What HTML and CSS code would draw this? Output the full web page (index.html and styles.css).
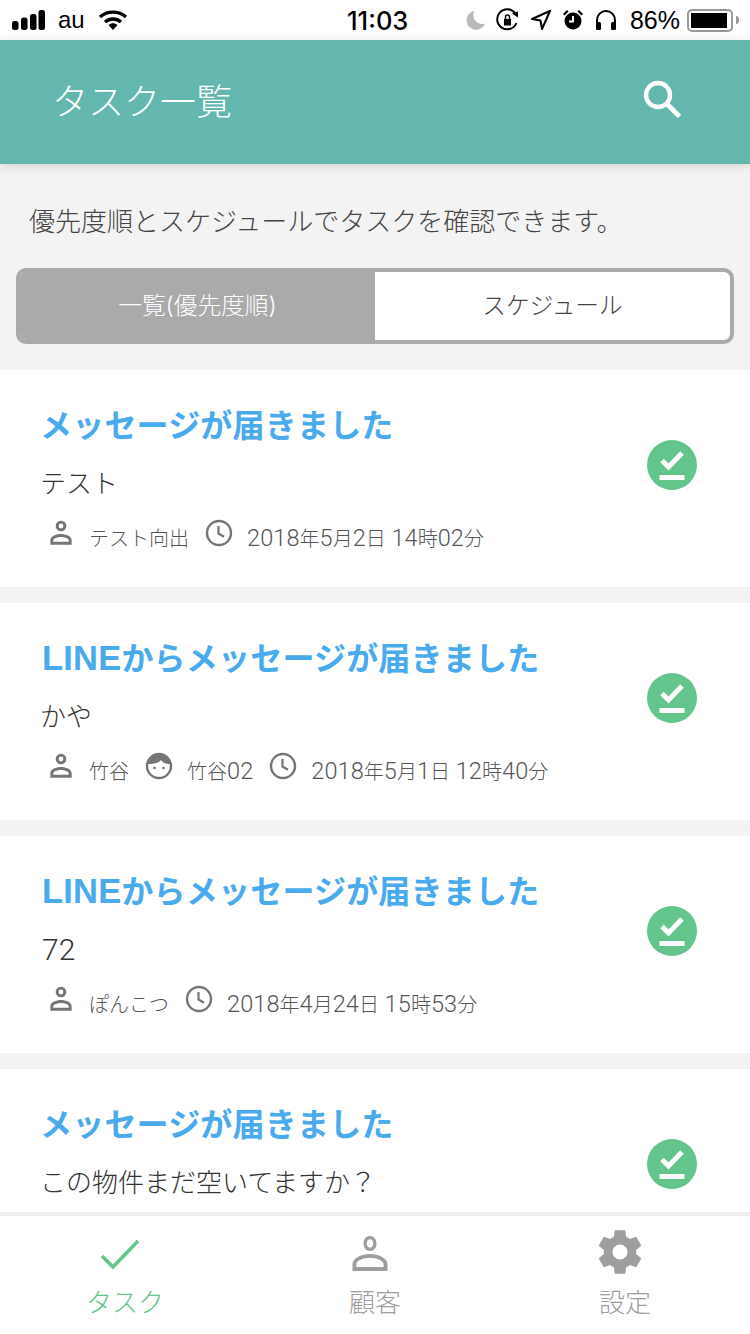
FILE: index.html
```html
<!DOCTYPE html>
<html lang="ja">
<head>
  <meta charset="UTF-8" />
  <meta name="viewport" content="width=device-width, initial-scale=1.0"/>
  <title>タスク一覧</title>
  <link rel="stylesheet" href="styles.css">
</head>
<body>
  <svg class="defs" width="0" height="0">
    <symbol id="i-person" viewBox="0 0 24 24">
      <path fill="currentColor" d="M12 2a4 4 0 1 0 0 8 4 4 0 0 0 0-8zm0 2.200a1.800 1.800 0 1 1 0 3.600 1.800 1.800 0 0 1 0-3.600zM12 12c-3.600 0-8 1.700-8 4.600V20h16v-3.400c0-2.900-4.400-4.600-8-4.600zm0 2.200c3 0 5.800 1.300 5.800 2.400v1.200H6.200v-1.200c0-1.100 2.800-2.400 5.800-2.400z"/>
    </symbol>
    <symbol id="i-clock" viewBox="0 0 28 28">
      <circle cx="14" cy="14" r="12" fill="none" stroke="currentColor" stroke-width="2.400"/>
      <path fill="none" stroke="currentColor" stroke-width="2.200" d="M13.500 7v7.500l5.500 3.200"/>
    </symbol>
    <symbol id="i-face" viewBox="0 0 28 28">
      <circle cx="14" cy="14" r="12" fill="none" stroke="currentColor" stroke-width="2.400"/>
      <path fill="currentColor" d="M3 12C5 4 10 2 14 2s10 3 11 10c-4 0-7-1-9-4-2 3-7 4-13 4z"/>
      <circle cx="9.500" cy="16" r="1.300" fill="currentColor"/>
      <circle cx="18.500" cy="16" r="1.300" fill="currentColor"/>
    </symbol>
    <symbol id="i-done" viewBox="0 0 50 50">
      <circle cx="25" cy="25" r="25" fill="#63c48c"/>
      <path fill="none" stroke="#fff" stroke-width="5" d="M15 20.500l6.500 6.500L35 13"/>
      <rect x="12.500" y="35" width="25" height="5" fill="#fff"/>
    </symbol>
  </svg>

  <div class="status-bar">
    <div class="status-left">
      <svg class="signal" width="33" height="20" viewBox="0 0 33 20">
        <rect x="0" y="11" width="6.500" height="9" rx="2.500"/>
        <rect x="9" y="7.500" width="6.500" height="12.500" rx="2.500"/>
        <rect x="18" y="4" width="6.500" height="16" rx="2.500"/>
        <rect x="26.500" y="0" width="6.500" height="20" rx="2.500"/>
      </svg>
      <span class="carrier">au</span>
      <svg class="wifi" width="30" height="22" viewBox="0 0 30 22">
        <path fill="none" stroke="#000" stroke-width="3.400" d="M2 8c7.500-6.500 18.500-6.500 26 0M7 13c4.700-4 11.300-4 16 0"/>
        <path d="M10.500 16c2.700-2.200 6.300-2.200 9 0L15 21z"/>
      </svg>
    </div>
    <div class="status-time">11:03</div>
    <div class="status-right">
      <svg width="20" height="20" viewBox="0 0 20 20"><path fill="#b9b9b9" d="M8 1a9.500 9.500 0 1 0 11 12.500C12 16 5 9 8 1z"/></svg>
      <svg width="24" height="24" viewBox="0 0 24 24">
        <path fill="none" stroke="#000" stroke-width="2" d="M20.500 15A10 10 0 1 1 19 5"/>
        <path d="M16 5.500l6-2v6zM8 11h7v6.500H8z"/>
        <path fill="none" stroke="#000" stroke-width="1.500" d="M9.500 11V9a2 2 0 0 1 4 0v2"/>
      </svg>
      <svg width="22" height="22" viewBox="0 0 22 22"><path fill="none" stroke="#000" stroke-width="2" stroke-linejoin="round" d="M20 2L2 10l8.500 1.500L12 20z"/></svg>
      <svg width="22" height="22" viewBox="0 0 22 22">
        <circle cx="11" cy="12" r="8.500"/>
        <path fill="none" stroke="#fff" stroke-width="2" d="M11 7v5.500H7"/>
        <path d="M1 5l4-4 1.500 1.500-4 4zM21 5l-4-4-1.500 1.500 4 4z"/>
      </svg>
      <svg width="24" height="22" viewBox="0 0 24 22">
        <path fill="none" stroke="#000" stroke-width="2" d="M3 17v-6a9 9 0 0 1 18 0v6"/>
        <rect x="2" y="13" width="5" height="8" rx="1.500"/>
        <rect x="17" y="13" width="5" height="8" rx="1.500"/>
      </svg>
      <span class="battery-pct">86%</span>
      <div class="battery"><div class="battery-fill"></div></div>
      <div class="battery-tip"></div>
    </div>
  </div>

  <header class="app-header">
    <h1 class="app-title">タスク一覧</h1>
    <svg class="search-icon" width="40" height="40" viewBox="0 0 40 40">
      <circle cx="16" cy="16" r="12" fill="none" stroke="#fff" stroke-width="4.400"/>
      <path fill="none" stroke="#fff" stroke-width="4.800" d="M24.500 24.500l13 13"/>
    </svg>
  </header>

  <main class="content">
    <p class="intro">優先度順とスケジュールでタスクを確認できます。</p>

    <div class="segment">
      <div class="segment-item is-active">一覧(優先度順)</div>
      <div class="segment-item">スケジュール</div>
    </div>

    <ul class="task-list">
      <li class="task">
        <div class="task-body">
          <div class="task-title">メッセージが届きました</div>
          <div class="task-text">テスト</div>
          <div class="task-meta">
            <span class="meta-item"><svg class="icon-person"><use href="#i-person"/></svg><span class="meta-text">テスト向出</span></span>
            <span class="meta-item"><svg class="icon-round"><use href="#i-clock"/></svg><span class="meta-text"><span class="num">2018</span>年<span class="num">5</span>月<span class="num">2</span>日 <span class="num">14</span>時<span class="num">02</span>分</span></span>
          </div>
        </div>
        <svg class="task-done"><use href="#i-done"/></svg>
      </li>
      <li class="task">
        <div class="task-body">
          <div class="task-title"><span class="title-latin">LINE</span>からメッセージが届きました</div>
          <div class="task-text">かや</div>
          <div class="task-meta">
            <span class="meta-item"><svg class="icon-person"><use href="#i-person"/></svg><span class="meta-text">竹谷</span></span>
            <span class="meta-item"><svg class="icon-round"><use href="#i-face"/></svg><span class="meta-text">竹谷<span class="num">02</span></span></span>
            <span class="meta-item"><svg class="icon-round"><use href="#i-clock"/></svg><span class="meta-text"><span class="num">2018</span>年<span class="num">5</span>月<span class="num">1</span>日 <span class="num">12</span>時<span class="num">40</span>分</span></span>
          </div>
        </div>
        <svg class="task-done"><use href="#i-done"/></svg>
      </li>
      <li class="task">
        <div class="task-body">
          <div class="task-title"><span class="title-latin">LINE</span>からメッセージが届きました</div>
          <div class="task-text task-text-num">72</div>
          <div class="task-meta">
            <span class="meta-item"><svg class="icon-person"><use href="#i-person"/></svg><span class="meta-text">ぽんこつ</span></span>
            <span class="meta-item"><svg class="icon-round"><use href="#i-clock"/></svg><span class="meta-text"><span class="num">2018</span>年<span class="num">4</span>月<span class="num">24</span>日 <span class="num">15</span>時<span class="num">53</span>分</span></span>
          </div>
        </div>
        <svg class="task-done"><use href="#i-done"/></svg>
      </li>
      <li class="task">
        <div class="task-body">
          <div class="task-title">メッセージが届きました</div>
          <div class="task-text">この物件まだ空いてますか？</div>
        </div>
        <svg class="task-done"><use href="#i-done"/></svg>
      </li>
    </ul>
  </main>

  <nav class="tab-bar">
    <div class="tab is-current">
      <svg class="tab-icon" viewBox="0 0 44 44"><path fill="none" stroke="currentColor" stroke-width="3.600" d="M4 26l11 11L40 11"/></svg>
      <span class="tab-label">タスク</span>
    </div>
    <div class="tab">
      <svg class="tab-icon" viewBox="0 0 44 44"><path fill="currentColor" fill-rule="evenodd" d="M22 6c-4 0-6.500 3.200-6.500 7.500S18 21 22 21s6.500-3.200 6.500-7.500S26 6 22 6zm0 3.300c2 0 3.200 1.900 3.200 4.200s-1.200 4.200-3.200 4.200-3.200-1.900-3.200-4.200 1.200-4.200 3.200-4.200zM22 24C14 24 4.500 28 4.500 34v7h35v-7c0-6-9.500-10-17.500-10zm0 3.800c6.500 0 13.600 3 13.600 6.200v3H8.400v-3c0-3.200 7.100-6.200 13.600-6.200z"/></svg>
      <span class="tab-label">顧客</span>
    </div>
    <div class="tab">
      <svg class="tab-icon tab-icon-gear" viewBox="0 0 24 24"><path fill="currentColor" d="M19.430 12.980c.04-.32.07-.64.07-.98s-.03-.66-.07-.98l2.110-1.650a.5.500 0 0 0 .12-.64l-2-3.460a.5.500 0 0 0-.61-.22l-2.490 1a7.300 7.300 0 0 0-1.690-.98l-.38-2.650A.49.490 0 0 0 14 2h-4a.49.490 0 0 0-.49.420l-.38 2.650a7.700 7.700 0 0 0-1.690.98l-2.490-1a.49.490 0 0 0-.61.220l-2 3.460a.49.490 0 0 0 .12.640l2.110 1.650c-.04.320-.07.650-.07.980s.03.660.07.980l-2.110 1.650a.5.500 0 0 0-.12.640l2 3.460c.12.220.39.300.61.220l2.490-1c.52.400 1.080.73 1.690.98l.38 2.650c.03.240.24.420.49.420h4c.25 0 .46-.18.49-.42l.38-2.650a7.700 7.700 0 0 0 1.690-.98l2.490 1c.23.090.49 0 .61-.22l2-3.460a.5.500 0 0 0-.12-.64zM12 15.500a3.500 3.500 0 1 1 0-7 3.500 3.500 0 0 1 0 7z"/></svg>
      <span class="tab-label">設定</span>
    </div>
  </nav>
</body>
</html>
```

FILE: styles.css
```css
html, body {
  margin: 0;
  height: 1334px;
  overflow: hidden;
}

body {
  display: flex;
  flex-direction: column;
  background: #f3f3f3;
  color: #444;
  font-family: Inter, "Noto Sans CJK JP", sans-serif;
}

.defs {
  position: absolute;
}

.status-bar {
  flex: none;
  display: flex;
  align-items: center;
  justify-content: space-between;
  height: 40px;
  padding: 0 11px 0 12px;
  background: #fff;
  color: #000;
  font-family: "Liberation Sans", sans-serif;
  position: relative;
}

.status-left, .status-right {
  display: flex;
  align-items: center;
}

.status-left {
  gap: 13px;
}

.status-right {
  gap: 10px;
}

.carrier {
  font-size: 24px;
}

.status-time {
  position: absolute;
  left: 347px;
  font-family: Inter, sans-serif;
  font-size: 25.500px;
  font-weight: 500;
}

.battery-pct {
  font-size: 25px;
  margin-left: 2px;
}

.battery {
  width: 46px;
  height: 23px;
  box-sizing: border-box;
  border: 2px solid #999;
  border-radius: 5px;
  padding: 2px;
  margin-left: -3px;
}

.battery-fill {
  width: 36px;
  height: 15px;
  background: #000;
}

.battery-tip {
  width: 3px;
  height: 8px;
  margin-left: -7px;
  background: #999;
  border-radius: 0 3px 3px 0;
}

.app-header {
  flex: none;
  display: flex;
  align-items: center;
  justify-content: space-between;
  height: 124px;
  padding: 0 68px 0 52px;
  background: #63b7af;
  box-shadow: 0 2px 10px rgba(0,0,0,0.14);
  position: relative;
}

.app-title {
  margin: 0 0 6px;
  font-size: 36px;
  font-weight: 300;
  color: #fff;
}

.search-icon {
  margin-bottom: 6px;
}

.content {
  flex: 1;
  min-height: 0;
  overflow: hidden;
}

.intro {
  margin: 0;
  padding: 39px 0 27px 29px;
  font-size: 26px;
  line-height: 38px;
  font-weight: 300;
  color: #444;
}

.segment {
  display: flex;
  height: 76px;
  margin: 0 16px 26px;
  box-sizing: border-box;
  border: 4px solid #aaa;
  border-radius: 10px;
  overflow: hidden;
  background: #fff;
}

.segment-item {
  flex: 1;
  display: flex;
  align-items: center;
  justify-content: center;
  padding-bottom: 4px;
  font-size: 23.700px;
  font-weight: 300;
  color: #444;
}

.segment-item.is-active {
  background: #aaa;
  color: #fff;
}

.task-list {
  list-style: none;
  margin: 0;
  padding: 0;
  display: flex;
  flex-direction: column;
  gap: 16px;
}

.task {
  flex: none;
  display: flex;
  align-items: flex-start;
  justify-content: space-between;
  height: 217px;
  box-sizing: border-box;
  padding: 32px 53px 0 40px;
  background: #fff;
}

.task-title {
  font-size: 32px;
  line-height: 48px;
  font-weight: 700;
  letter-spacing: 0.2px;
  color: #4aaaee;
}

.title-latin {
  font-family: "Liberation Sans", sans-serif;
  font-size: 34.500px;
  line-height: 1;
  margin-left: 2px;
}

.task-text {
  margin-top: 16px;
  font-size: 26px;
  line-height: 36px;
  font-weight: 300;
  color: #333;
}

.task-text-num {
  font-family: Roboto, sans-serif;
  font-size: 30px;
  margin-left: 2px;
}

.task-meta {
  display: flex;
  gap: 16px;
  margin-top: 17px;
  margin-left: 5px;
}

.meta-item {
  display: flex;
  align-items: center;
  gap: 12px;
  font-size: 20px;
  line-height: 36px;
  font-weight: 300;
  color: #555;
}

.meta-text {
  padding-top: 2px;
  white-space: nowrap;
}

.num {
  font-family: Roboto, sans-serif;
  font-size: 23.500px;
  line-height: 1;
  letter-spacing: 0.1px;
}

.meta-item svg {
  color: #757575;
}

.icon-person {
  width: 32px;
  height: 32px;
  margin-top: -8px;
}

.icon-round {
  width: 28px;
  height: 28px;
  margin-top: -10px;
  margin-right: 2px;
}

.task-done {
  flex: none;
  width: 50px;
  height: 50px;
  margin-top: 38px;
}

.tab-bar {
  flex: none;
  display: flex;
  height: 118px;
  border-top: 4px solid #eee;
  background: #fff;
}

.tab {
  flex: 1;
  display: flex;
  flex-direction: column;
  align-items: center;
  padding-top: 14px;
  color: #9e9e9e;
}

.tab.is-current {
  color: #63c48c;
}

.tab-icon {
  width: 44px;
  height: 44px;
  margin-right: 10px;
}

.tab-icon-gear {
  width: 52px;
  height: 52px;
  margin-top: -4px;
  margin-bottom: -4px;
}

.tab-label {
  font-size: 26px;
  line-height: 36px;
  font-weight: 300;
  margin-top: 11px;
}
```
